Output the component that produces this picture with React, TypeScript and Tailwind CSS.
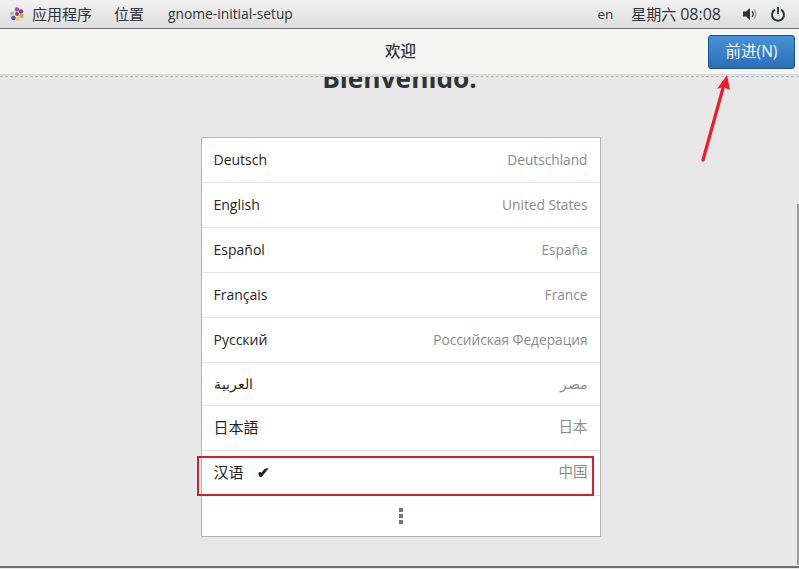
const FONT = "font-['Open_Sans','Noto_Sans_CJK_SC',sans-serif]";

const rows: { l: string; r: string; h: string; cjk?: boolean; check?: boolean }[] = [
  { l: "Deutsch", r: "Deutschland", h: "h-[45px]" },
  { l: "English", r: "United States", h: "h-[45px]" },
  { l: "Español", r: "España", h: "h-[45px]" },
  { l: "Français", r: "France", h: "h-[45px]" },
  { l: "Русский", r: "Российская Федерация", h: "h-[45px]" },
  { l: "العربية", r: "مصر", h: "h-[43px]" },
  { l: "日本語", r: "日本", h: "h-[45px]", cjk: true },
  { l: "汉语", r: "中国", h: "h-[45px]", cjk: true, check: true },
];

function Logo() {
  return (
    <svg width="16" height="16" viewBox="0 0 16 16" className="shrink-0">
      <circle cx="8" cy="3.5" r="2.2" fill="#b84c94" />
      <circle cx="12" cy="5.5" r="2.2" fill="#8a3d8c" />
      <circle cx="12.5" cy="10" r="2.2" fill="#d9a441" />
      <circle cx="9" cy="13" r="2.1" fill="#e6d24f" />
      <circle cx="4.5" cy="12" r="2.3" fill="#5454a8" />
      <circle cx="3" cy="7.5" r="2.1" fill="#c9b78a" />
      <circle cx="8" cy="8" r="2" fill="#6e4f72" />
    </svg>
  );
}

function Speaker() {
  return (
    <svg width="16" height="16" viewBox="0 0 16 16" className="shrink-0">
      <path d="M1 5.5h3L8 2v12L4 10.5H1z" fill="#2e3436" />
      <path d="M10 5.2a4 4 0 0 1 0 5.6" fill="none" stroke="#2e3436" strokeWidth="1.4" />
      <path d="M12 3.5a6.5 6.5 0 0 1 0 9" fill="none" stroke="#9a9c9c" strokeWidth="1.3" />
    </svg>
  );
}

function Power() {
  return (
    <svg width="16" height="16" viewBox="0 0 16 16" className="shrink-0">
      <path d="M5 3.6a6 6 0 1 0 6 0" fill="none" stroke="#2e3436" strokeWidth="1.9" />
      <path d="M8 1v7" fill="none" stroke="#2e3436" strokeWidth="1.9" />
    </svg>
  );
}

export default function App() {
  return (
    <div className={`relative w-[799px] h-[569px] overflow-hidden flex flex-col bg-[#e8e8e8] ${FONT} antialiased`}>
      <div className="h-[29px] shrink-0 flex items-center pl-[9px] pr-[13px] text-[14px] text-[#2e3436] bg-gradient-to-b from-[#f2f2f2] to-[#dedede] border-b border-[#6f7070]">
        <Logo />
        <span className="ml-[7px] text-[15px]">应用程序</span>
        <span className="ml-[22px] text-[15px]">位置</span>
        <span className="ml-[24px] text-[13.8px]">gnome-initial-setup</span>
        <span className="ml-auto text-[13.5px]">en</span>
        <span className="ml-[18px] text-[15px]">
          星期六 <span className="text-[16px]">08:08</span>
        </span>
        <span className="ml-[21px]"><Speaker /></span>
        <span className="ml-[12px]"><Power /></span>
      </div>

      <div className="h-[46px] shrink-0 relative flex items-center justify-center bg-[#f5f5f4] border-b border-[#d8d8d6]">
        <span className="text-[15.5px] font-medium text-[#2e3436] ml-[2px]">欢迎</span>
        <button className="absolute left-[708px] top-[6px] w-[87px] h-[34px] rounded-[3px] border border-[#1c5187] bg-gradient-to-b from-[#4a90d9] to-[#2a6fb8] text-[15.5px] text-[#f4f8fc]">
          前进(N)
        </button>
      </div>

      <div className="h-px shrink-0 border-t border-dashed border-[#b4b4b4] mt-px" />

      <main className="flex-1 min-h-0 flex flex-col items-center overflow-hidden">
        <h1 className="text-[26.3px] leading-[34px] font-bold text-[#2e3436] mt-[-16px] mb-[42px] h-[34px] shrink-0">
          Bienvenido.
        </h1>
        <div className="w-[400px] h-[400px] ml-[2px] shrink-0 flex flex-col bg-white border border-[#b4b4b4]">
          {rows.map((row) => (
            <div
              key={row.l}
              className={`${row.h} shrink-0 flex items-center justify-between pl-3 pr-3 border-b border-[#e4e4e4]`}
            >
              <span className={`flex items-center text-[#1f2426] -mt-[2px] ${row.cjk ? "text-[15px]" : "text-[14px]"}`}>
                <span>{row.l}</span>
                {row.check && <span className="ml-[13px] text-[15px] font-bold leading-none">✔</span>}
              </span>
              <span className={`text-[#8a8c8c] ${row.cjk ? "text-[14.5px] -mt-[2px]" : "text-[13.7px]"}`}>{row.r}</span>
            </div>
          ))}
          <div className="flex-1 flex items-center justify-center">
            <span className="flex flex-col gap-[2px]">
              <span className="block w-1 h-1 bg-[#777]" />
              <span className="block w-1 h-1 bg-[#777]" />
              <span className="block w-1 h-1 bg-[#777]" />
            </span>
          </div>
        </div>
      </main>

      <div className="h-[2px] shrink-0 bg-[#6f7070] mb-px" />

      {/* scrollbar sliver */}
      <div className="absolute left-[797px] top-[204px] w-[2px] h-[361px] bg-[#9a9a9a]" />

      {/* annotation: red box */}
      <div className="absolute left-[197px] top-[456px] w-[397px] h-[40px] border-2 border-[#d3202c]" />

      {/* annotation: arrow */}
      <svg className="absolute left-[695px] top-[70px]" width="40" height="95" viewBox="0 0 40 95">
        <path d="M8 90L28 18" stroke="#ec1c2b" strokeWidth="3.2" strokeLinecap="round" fill="none" />
        <path d="M32 5L22 19L28 17L35 20Z" fill="#ec1c2b" />
      </svg>
    </div>
  );
}
